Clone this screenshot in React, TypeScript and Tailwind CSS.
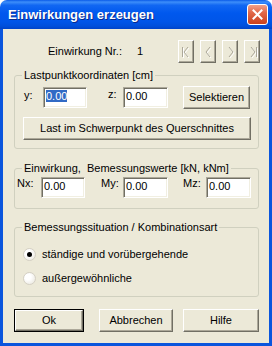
import React from "react";

const font = "font-['Liberation_Sans',Arial,sans-serif]";

const raised =
  "border border-t-white border-l-white border-r-[#716F64] border-b-[#716F64] shadow-[inset_-1px_-1px_0_#ACA899] bg-[#ECE9D8]";
const sunken =
  "border border-t-[#ACA899] border-l-[#ACA899] border-r-white border-b-white shadow-[inset_1px_1px_0_#716F64,inset_-1px_-1px_0_#F1EFE2] bg-white";

const TextBox = ({ value, selected, w }: { value: string; selected?: boolean; w: string }) => (
  <div className={`${sunken} ${w} h-[21px] pl-[2px] pt-[2px] text-[11px] leading-[13px]`}>
    {selected ? <span className="bg-[#316AC5] text-white">{value}</span> : value}
  </div>
);

const Button = ({ label, w, isDefault }: { label: string; w: string; isDefault?: boolean }) => (
  <div className={`${w} h-[23px] ${isDefault ? "border border-black" : ""}`}>
    <div className={`${raised} h-full flex items-center justify-center text-[11px]`}>{label}</div>
  </div>
);

const NavButton = ({ kind }: { kind: "first" | "prev" | "next" | "last" }) => {
  const chev = kind === "first" || kind === "prev" ? "M9 6 L5 11 L9 16" : "M6 6 L10 11 L6 16";
  return (
    <div className={`${raised} w-[16px] h-[23px]`}>
      <svg width="14" height="21" viewBox="0 0 14 21">
        <g fill="none" strokeWidth="1">
          {kind === "first" && <path d="M3.5 6 V16" stroke="#FFFFFF" transform="translate(1,1)" />}
          {kind === "last" && <path d="M11.5 6 V16" stroke="#FFFFFF" transform="translate(1,1)" />}
          <path d={chev} stroke="#FFFFFF" transform="translate(1,1)" />
          {kind === "first" && <path d="M3.5 6 V16" stroke="#ACA899" />}
          {kind === "last" && <path d="M11.5 6 V16" stroke="#ACA899" />}
          <path d={chev} stroke="#ACA899" />
        </g>
      </svg>
    </div>
  );
};

const Group = ({ title, h, mt, children }: { title: string; h: string; mt: string; children: React.ReactNode }) => (
  <div className={`relative w-[245px] ${h} ${mt} border border-[#D0D0BF] rounded-[3px]`}>
    <span className="absolute left-[7px] -top-[7px] bg-[#ECE9D8] px-[2px] text-[11px] leading-[13px] whitespace-pre">
      {title}
    </span>
    {children}
  </div>
);

const Radio = ({ checked, label }: { checked?: boolean; label: string }) => (
  <div className="flex items-center h-[13px]">
    <span className="w-[13px] h-[13px] rounded-full border border-[#D4D0C4] bg-[radial-gradient(circle_at_35%_35%,#FFFFFF_30%,#E6E3D8_100%)] flex items-center justify-center">
      {checked && <span className="w-[5px] h-[5px] rounded-full bg-black" />}
    </span>
    <span className="ml-[6px] text-[11px]">{label}</span>
  </div>
);

export default function App() {
  return (
    <div className={`w-[272px] h-[346px] flex flex-col ${font} text-black select-none`}>
      {/* Title bar */}
      <div className="h-[29px] rounded-t-[7px] bg-[linear-gradient(to_bottom,#0A5BE8_0%,#3D8EFA_7%,#1167F2_18%,#0058EE_45%,#0055E8_75%,#004FDB_90%,#0043C8_100%)] flex items-center pl-[8px] pr-[4px]">
        <span className="text-white font-bold text-[13px] [text-shadow:1px_1px_0_#0A2A8C]">Einwirkungen erzeugen</span>
        <div className="ml-auto w-[21px] h-[21px] rounded-[3px] border border-white bg-[linear-gradient(to_bottom,#F0A08A,#E1684A_40%,#C9401E)] flex items-center justify-center">
          <svg width="11" height="11" viewBox="0 0 11 11">
            <path d="M1.5 1.5 L9.5 9.5 M9.5 1.5 L1.5 9.5" stroke="white" strokeWidth="2" strokeLinecap="square" />
          </svg>
        </div>
      </div>

      {/* Client */}
      <div className="flex-1 border-x-[3px] border-b-[3px] border-[#0A55DD] bg-[#ECE9D8] pl-[11px] pt-[11px]">
        {/* Header row */}
        <div className="w-[245px] h-[23px] flex items-center text-[11px]">
          <span className="ml-[34px] w-[89px]">Einwirkung Nr.:</span>
          <span>1</span>
          <div className="ml-auto flex gap-[6px] -mr-[1px]">
            <NavButton kind="first" />
            <NavButton kind="prev" />
            <NavButton kind="next" />
            <NavButton kind="last" />
          </div>
        </div>

        {/* Lastpunktkoordinaten */}
        <Group title="Lastpunktkoordinaten [cm]" h="h-[74px]" mt="mt-[12px]">
          <div className="flex items-start pt-[10px] pl-[9px] text-[11px]">
            <span className="w-[19px] mt-[1px]">y:</span>
            <div className="mt-[1px]">
              <TextBox value="0.00" selected w="w-[44px]" />
            </div>
            <span className="ml-[21px] w-[15px] mt-[0px]">z:</span>
            <div className="mt-[1px]">
              <TextBox value="0.00" w="w-[45px]" />
            </div>
            <div className="ml-[15px]">
              <Button label="Selektieren" w="w-[67px]" />
            </div>
          </div>
          <div className="pl-[8px] mt-[8px]">
            <Button label="Last im Schwerpunkt des Querschnittes" w="w-[228px]" />
          </div>
        </Group>

        {/* Bemessungswerte */}
        <Group title="Einwirkung,  Bemessungswerte [kN, kNm]" h="h-[41px]" mt="mt-[19px]">
          <div className="flex items-start pt-[8px] pl-[2px] text-[11px]">
            <span className="w-[24px] -mt-[2px]">Nx:</span>
            <TextBox value="0.00" w="w-[44px]" />
            <span className="ml-[16px] w-[22px] -mt-[2px]">My:</span>
            <TextBox value="0.00" w="w-[45px]" />
            <span className="ml-[15px] w-[23px] -mt-[2px]">Mz:</span>
            <TextBox value="0.00" w="w-[45px]" />
          </div>
        </Group>

        {/* Bemessungssituation */}
        <Group title="Bemessungssituation / Kombinationsart" h="h-[70px]" mt="mt-[18px]">
          <div className="flex flex-col gap-[11px] pt-[20px] pl-[8px]">
            <Radio checked label="ständige und vorübergehende" />
            <Radio label="außergewöhnliche" />
          </div>
        </Group>

        {/* Buttons */}
        <div className="flex mt-[12px]">
          <Button label="Ok" w="w-[70px]" isDefault />
          <div className="ml-[15px]">
            <Button label="Abbrechen" w="w-[74px]" />
          </div>
          <div className="ml-[10px]">
            <Button label="Hilfe" w="w-[76px]" />
          </div>
        </div>
      </div>
    </div>
  );
}
